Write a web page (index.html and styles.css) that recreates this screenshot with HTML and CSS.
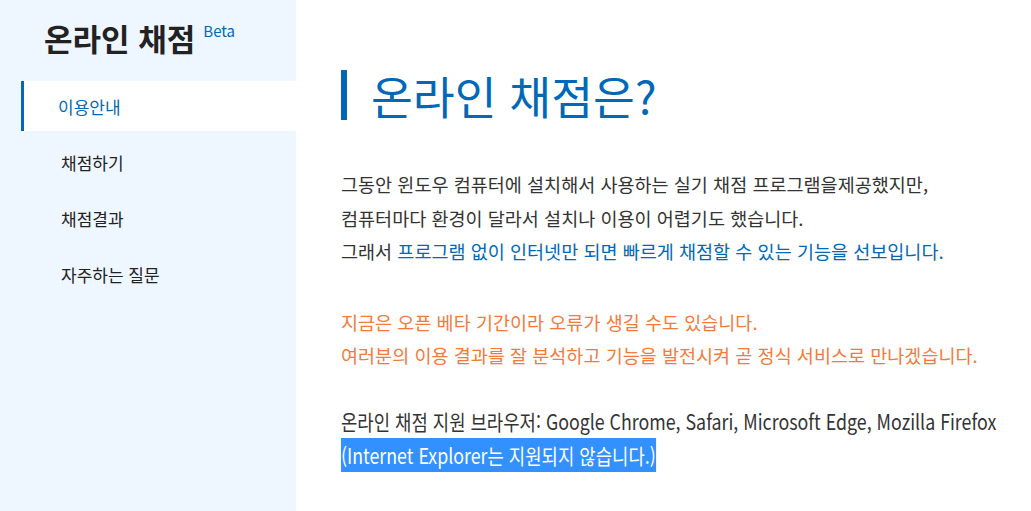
FILE: index.html
```html
<!DOCTYPE html>
<html lang="ko">
<head>
<meta charset="utf-8">
<title>온라인 채점</title>
<link rel="stylesheet" href="styles.css">
</head>
<body>
<aside class="sidebar">
  <div class="brand">
    <span class="brand-name">온라인 채점</span>
    <span class="brand-beta">Beta</span>
  </div>
  <nav class="menu">
    <a class="menu-item active">이용안내</a>
    <a class="menu-item">채점하기</a>
    <a class="menu-item">채점결과</a>
    <a class="menu-item">자주하는 질문</a>
  </nav>
</aside>
<main class="content">
  <h1 class="heading">온라인 채점은?</h1>
  <p class="para">
    그동안 윈도우 컴퓨터에 설치해서 사용하는 실기 채점 프로그램을제공했지만,<br>
    컴퓨터마다 환경이 달라서 설치나 이용이 어렵기도 했습니다.<br>
    그래서 <span class="blue">프로그램 없이 인터넷만 되면 빠르게 채점할 수 있는 기능을 선보입니다.</span>
  </p>
  <p class="para orange">
    지금은 오픈 베타 기간이라 오류가 생길 수도 있습니다.<br>
    여러분의 이용 결과를 잘 분석하고 기능을 발전시켜 곧 정식 서비스로 만나겠습니다.
  </p>
  <div class="para browsers">
    <span class="cond-line">온라인 채점 지원 브라우저: Google Chrome, Safari, Microsoft Edge, Mozilla Firefox</span>
    <span class="cond-line selected">(Internet Explorer는 지원되지 않습니다.)</span>
  </div>
</main>
</body>
</html>
```
FILE: styles.css
```css
html, body {
  margin: 0;
  padding: 0;
}
body {
  display: flex;
  min-height: 511px;
  overflow: hidden;
  font-family: "Noto Sans CJK KR", "Noto Sans", sans-serif;
  color: #333;
  background: #fff;
}
.sidebar {
  width: 296px;
  flex: none;
  background: #eef6ff;
  min-height: 511px;
}
.brand {
  display: flex;
  align-items: flex-start;
  padding: 15px 0 0 44px;
  height: 65px;
  box-sizing: border-box;
}
.brand-name {
  font-size: 31px;
  font-weight: 700;
  line-height: 46px;
  color: #222;
}
.brand-beta {
  font-size: 15px;
  line-height: 20px;
  color: #0068b7;
  margin-left: 8px;
  margin-top: 6px;
}
.menu {
  display: flex;
  flex-direction: column;
  gap: 6px;
  padding-left: 21px;
  margin-top: 16px;
}
.menu-item {
  display: flex;
  align-items: center;
  height: 50px;
  padding-left: 37px;
  font-size: 17px;
  color: #222;
  border-left: 3px solid transparent;
}
.menu-item.active {
  background: #fff;
  color: #0068b7;
  border-left-color: #0068b7;
  padding-left: 34px;
}
.content {
  padding: 70px 0 0 45px;
  flex: 1;
  overflow: hidden;
}
.heading {
  margin: 0;
  border-left: 6px solid #0068b7;
  padding-left: 24px;
  font-size: 45.5px;
  font-weight: 400;
  line-height: 50px;
  color: #0068b7;
}
.para {
  margin: 47px 0 0 0;
  font-size: 18.55px;
  line-height: 33.5px;
  white-space: nowrap;
}
.para + .para {
  margin-top: 37px;
}
.blue {
  color: #0068b7;
}
.orange {
  color: #f47a3c;
}
.browsers {
  display: flex;
  flex-direction: column;
  align-items: flex-start;
  font-size: 21px;
}
.para.browsers {
  margin-top: 32px;
}
.cond-line {
  display: block;
  line-height: 34px;
  transform: scaleX(0.847);
  transform-origin: left center;
}
.selected {
  background: #3390ff;
  color: #fff;
}
```
